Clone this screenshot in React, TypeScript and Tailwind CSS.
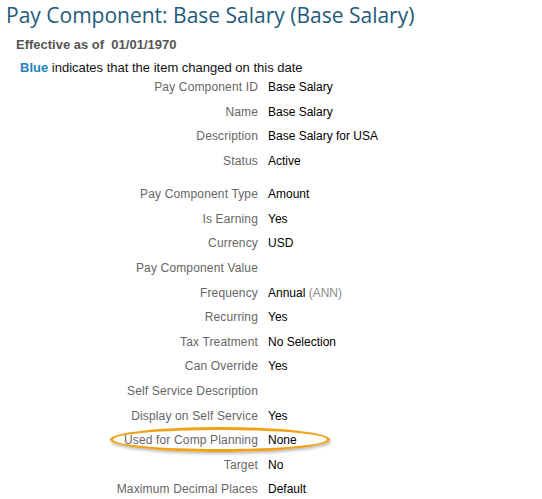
import React from 'react';

type Row = { label: string; value?: React.ReactNode; gapBefore?: boolean; highlight?: boolean };

const rows: Row[] = [
  { label: 'Pay Component ID', value: 'Base Salary' },
  { label: 'Name', value: 'Base Salary' },
  { label: 'Description', value: 'Base Salary for USA' },
  { label: 'Status', value: 'Active' },
  { label: 'Pay Component Type', value: 'Amount', gapBefore: true },
  { label: 'Is Earning', value: 'Yes' },
  { label: 'Currency', value: 'USD' },
  { label: 'Pay Component Value' },
  {
    label: 'Frequency',
    value: (
      <>
        Annual <span className="text-[#8a8a8a]">(ANN)</span>
      </>
    ),
  },
  { label: 'Recurring', value: 'Yes' },
  { label: 'Tax Treatment', value: 'No Selection' },
  { label: 'Can Override', value: 'Yes' },
  { label: 'Self Service Description' },
  { label: 'Display on Self Service', value: 'Yes' },
  { label: 'Used for Comp Planning', value: 'None', highlight: true },
  { label: 'Target', value: 'No' },
  { label: 'Maximum Decimal Places', value: 'Default' },
];

export default function App() {
  return (
    <div className="w-[542px] h-[499px] overflow-hidden bg-white font-['Liberation_Sans',Arial,sans-serif]">
      <h1 className="pl-[6px] pt-[1px] text-[21px] leading-[28px] text-[#235a7c] font-['Open_Sans',sans-serif]">
        Pay Component: Base Salary (Base Salary)
      </h1>
      <div className="pl-[16px] mt-[8px] text-[13px] leading-[16px] font-bold text-[#555]">
        Effective as of&nbsp;&nbsp;01/01/1970
      </div>
      <div className="pl-[20px] mt-[7px] text-[13px] leading-[16px] text-[#111]">
        <span className="font-bold text-[#1f82b8]">Blue</span> indicates that the item changed on this date
      </div>
      <div className="-mt-[1px] text-[12px]">
        {rows.map((r) => (
          <div
            key={r.label}
            className={`relative grid grid-cols-[258px_1fr] gap-x-[10px] h-[24.6px] items-center ${r.gapBefore ? 'mt-[8.5px]' : ''}`}
          >
            <span className="text-right text-[#666] tracking-[0.15px]">{r.label}</span>
            <span className="text-black">{r.value}</span>
            {r.highlight && (
              <span className="absolute left-[110px] top-[-0.5px] w-[220px] h-[25px] rounded-[50%] border-[3px] border-[#f0a21a] shadow-[1px_2px_3px_rgba(0,0,0,0.25)]" />
            )}
          </div>
        ))}
      </div>
    </div>
  );
}
